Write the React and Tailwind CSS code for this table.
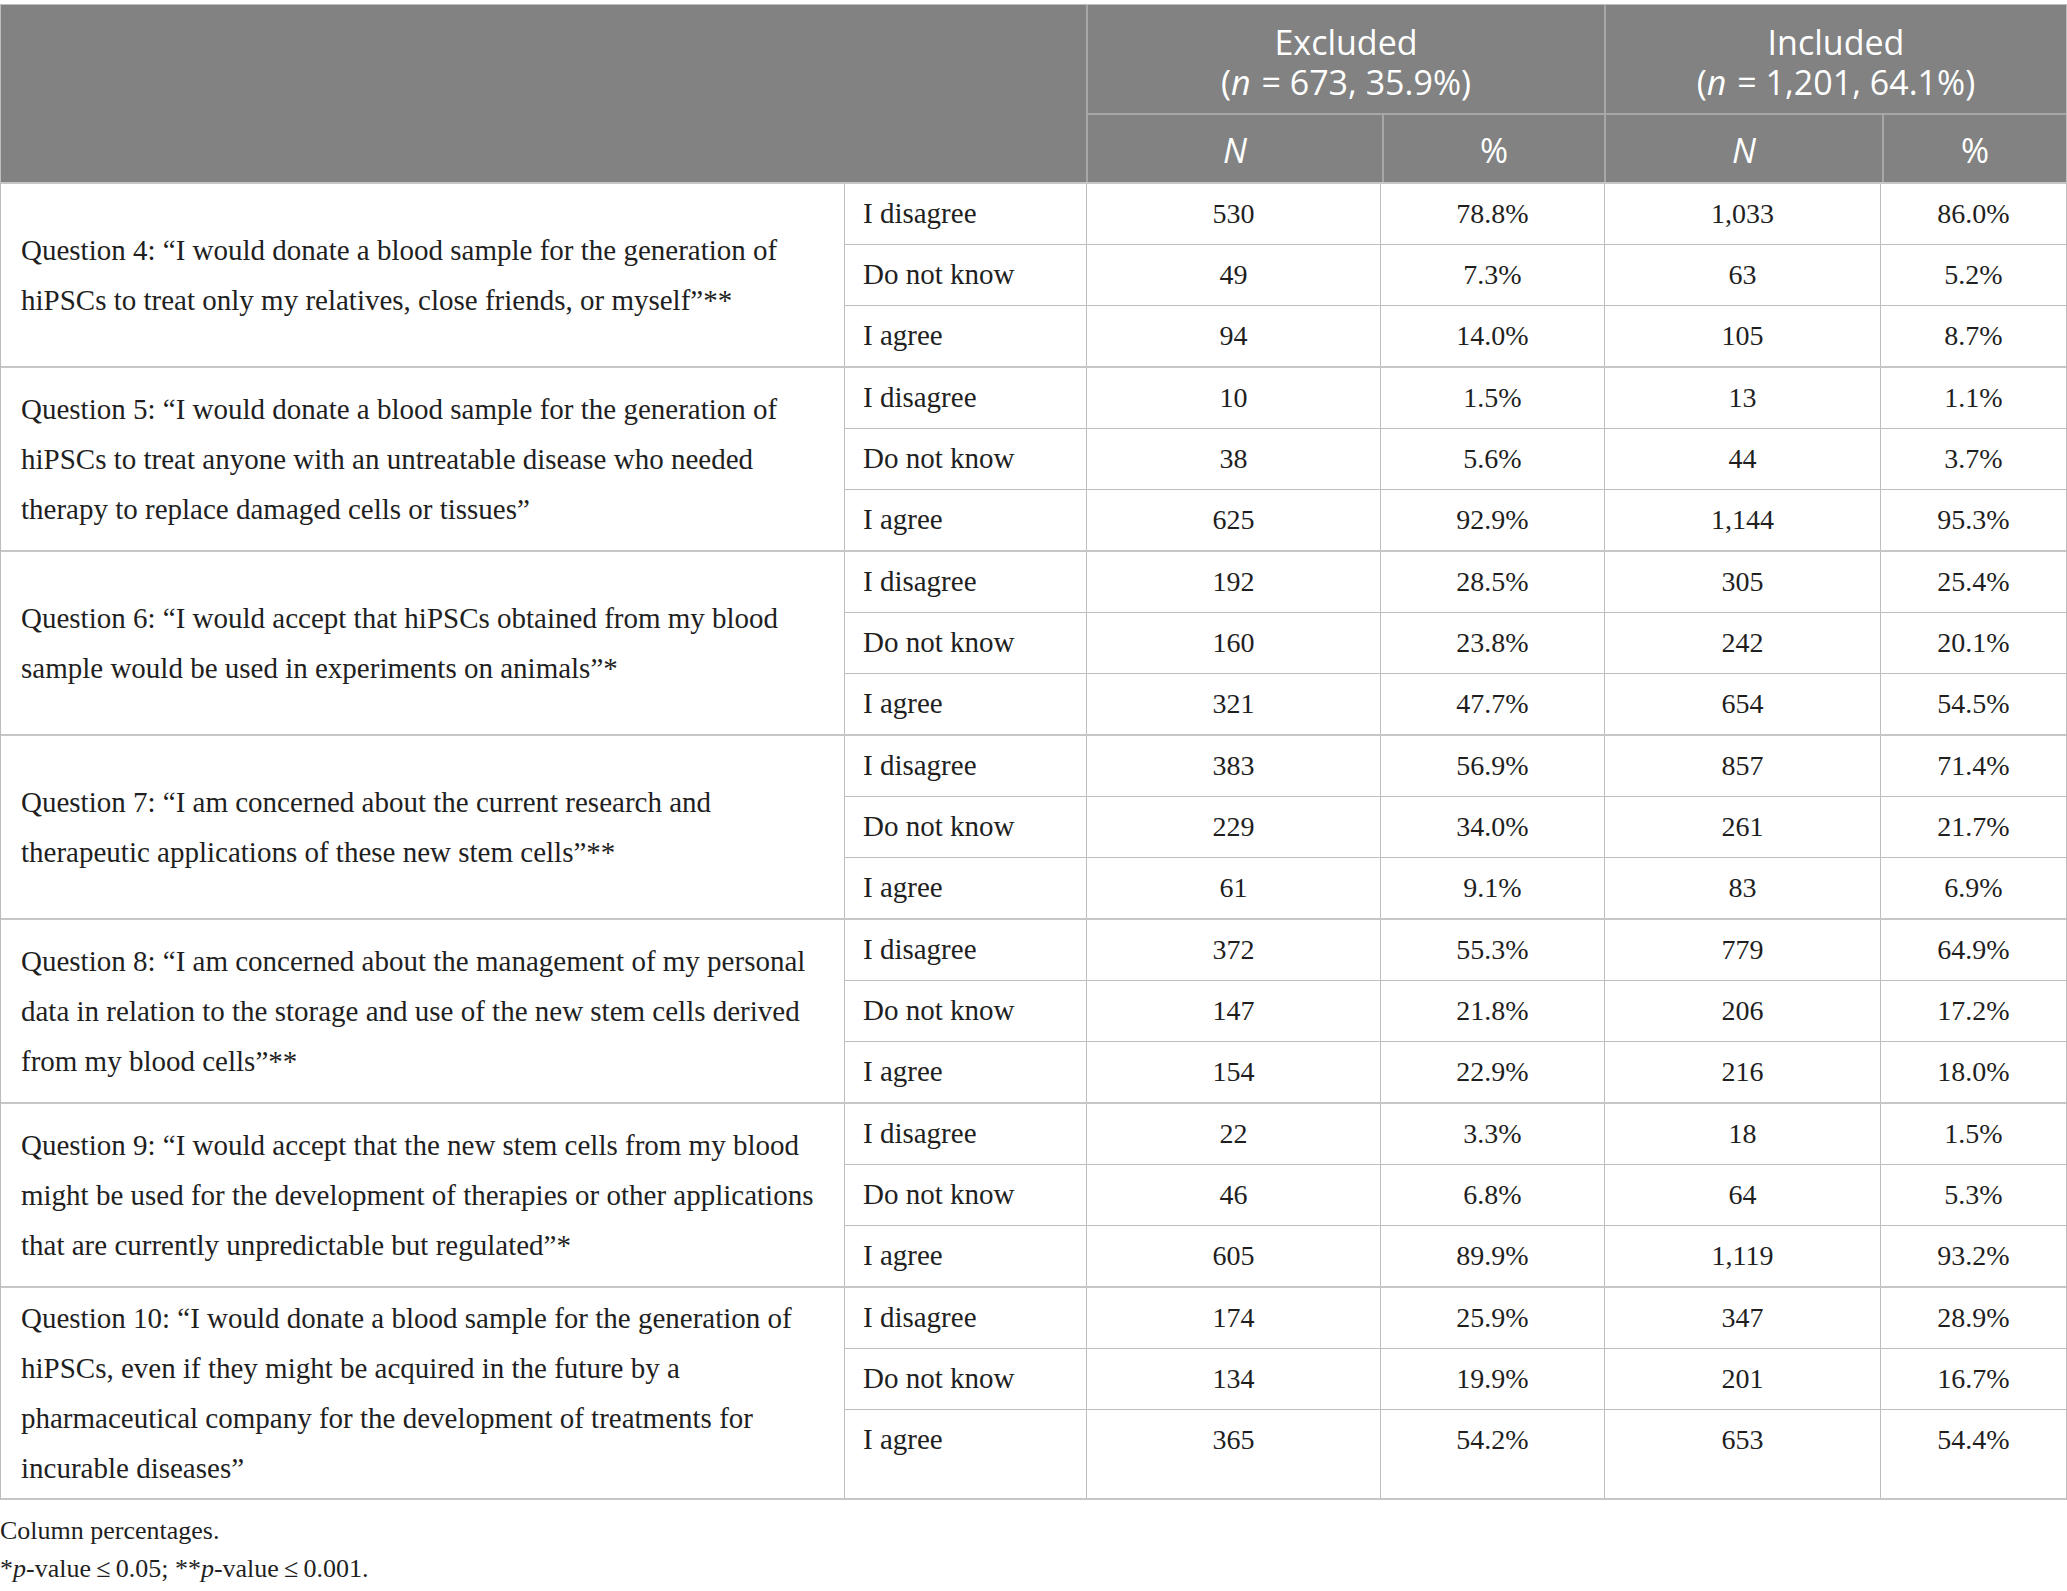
import React from "react";

const groups = [
  {
    q: [
      "Question 4: “I would donate a blood sample for the generation of",
      "hiPSCs to treat only my relatives, close friends, or myself”**",
    ],
    rows: [
      ["530", "78.8%", "1,033", "86.0%"],
      ["49", "7.3%", "63", "5.2%"],
      ["94", "14.0%", "105", "8.7%"],
    ],
  },
  {
    q: [
      "Question 5: “I would donate a blood sample for the generation of",
      "hiPSCs to treat anyone with an untreatable disease who needed",
      "therapy to replace damaged cells or tissues”",
    ],
    rows: [
      ["10", "1.5%", "13", "1.1%"],
      ["38", "5.6%", "44", "3.7%"],
      ["625", "92.9%", "1,144", "95.3%"],
    ],
  },
  {
    q: [
      "Question 6: “I would accept that hiPSCs obtained from my blood",
      "sample would be used in experiments on animals”*",
    ],
    rows: [
      ["192", "28.5%", "305", "25.4%"],
      ["160", "23.8%", "242", "20.1%"],
      ["321", "47.7%", "654", "54.5%"],
    ],
  },
  {
    q: [
      "Question 7: “I am concerned about the current research and",
      "therapeutic applications of these new stem cells”**",
    ],
    rows: [
      ["383", "56.9%", "857", "71.4%"],
      ["229", "34.0%", "261", "21.7%"],
      ["61", "9.1%", "83", "6.9%"],
    ],
  },
  {
    q: [
      "Question 8: “I am concerned about the management of my personal",
      "data in relation to the storage and use of the new stem cells derived",
      "from my blood cells”**",
    ],
    rows: [
      ["372", "55.3%", "779", "64.9%"],
      ["147", "21.8%", "206", "17.2%"],
      ["154", "22.9%", "216", "18.0%"],
    ],
  },
  {
    q: [
      "Question 9: “I would accept that the new stem cells from my blood",
      "might be used for the development of therapies or other applications",
      "that are currently unpredictable but regulated”*",
    ],
    rows: [
      ["22", "3.3%", "18", "1.5%"],
      ["46", "6.8%", "64", "5.3%"],
      ["605", "89.9%", "1,119", "93.2%"],
    ],
  },
  {
    q: [
      "Question 10: “I would donate a blood sample for the generation of",
      "hiPSCs, even if they might be acquired in the future by a",
      "pharmaceutical company for the development of treatments for",
      "incurable diseases”",
    ],
    rows: [
      ["174", "25.9%", "347", "28.9%"],
      ["134", "19.9%", "201", "16.7%"],
      ["365", "54.2%", "653", "54.4%"],
    ],
  },
];

const labels = ["I disagree", "Do not know", "I agree"];
const numW = ["w-[294px]", "w-[224px]", "w-[276px]", "w-[186px]"];

function Row({ label, vals, last }) {
  return (
    <div className={"flex " + (last ? "flex-1" : "h-[61px] border-b border-[#bdbdbd]")}>
      <div className="w-[242px] border-l border-[#bdbdbd] pl-[18px]">
        <div className="h-[60px] flex items-center">{label}</div>
      </div>
      {vals.map((v, i) => (
        <div key={i} className={numW[i] + " border-l border-[#bdbdbd]"}>
          <div className="h-[60px] flex items-center justify-center text-[28px]">{v}</div>
        </div>
      ))}
    </div>
  );
}

function Group({ g }) {
  return (
    <div className="flex border-t-2 border-[#c6c6c6]">
      <div className="w-[843px] flex flex-col justify-center pl-[20px] py-[5px] leading-[50px]">
        {g.q.map((l, i) => (
          <span key={i} className="whitespace-nowrap">{l}</span>
        ))}
      </div>
      <div className="flex flex-col min-h-[182px]">
        {g.rows.map((r, i) => (
          <Row key={i} label={labels[i]} vals={r} last={i === 2} />
        ))}
      </div>
    </div>
  );
}

function HeadGroup({ title, n, rest, widthCls, nW }) {
  return (
    <div className={widthCls + " border-l-2 border-[#a6a7a6] flex flex-col"}>
      <div className="h-[110px] border-b-2 border-[#a6a7a6] flex flex-col items-center justify-center leading-[40px] pt-[6px]">
        <span>{title}</span>
        <span>
          (<i className="pr-[2px]">n</i> = {n}, {rest})
        </span>
      </div>
      <div className="flex flex-1">
        <div className={nW + " flex items-center justify-center italic pt-[4px]"}>N</div>
        <div className="flex-1 border-l-2 border-[#a6a7a6] flex items-center justify-center pt-[4px]">%</div>
      </div>
    </div>
  );
}

export default function App() {
  return (
    <div className="w-[2067px] bg-white pt-[4px] text-[#1f1f1f] font-['Liberation_Serif',serif] text-[29px]">
      <div className="border border-b-2 border-[#bdbdbd] border-b-[#c6c6c6]">
        <div className="flex h-[177px] bg-[#818281] text-white font-['Open_Sans',sans-serif] text-[34px]">
          <div className="w-[1085px]" />
          <HeadGroup title="Excluded" n="673" rest="35.9%" widthCls="w-[518px]" nW="w-[294px]" />
          <HeadGroup title="Included" n="1,201" rest="64.1%" widthCls="flex-1" nW="w-[276px]" />
        </div>
        {groups.map((g, i) => (
          <Group key={i} g={g} />
        ))}
      </div>
      <div className="mt-[12px] text-[26px] leading-[38px]">
        <p>Column percentages.</p>
        <p>
          *<i>p</i>-value{"\u2009≤\u2009"}0.05; **<i>p</i>-value{"\u2009≤\u2009"}0.001.
        </p>
      </div>
    </div>
  );
}
